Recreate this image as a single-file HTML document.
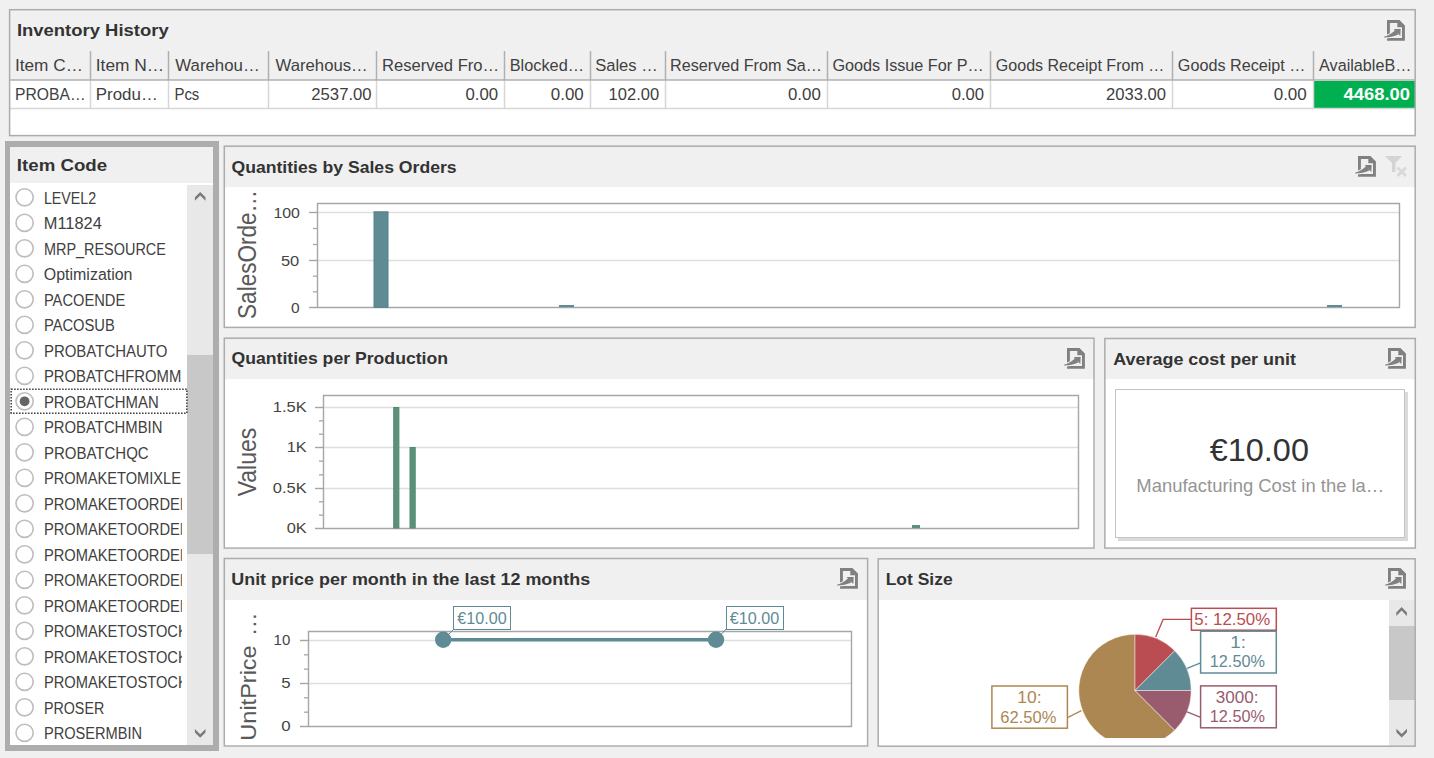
<!DOCTYPE html><html><head><meta charset="utf-8"><style>
html,body{margin:0;padding:0;}
body{width:1434px;height:758px;background:#f0f0f0;position:relative;overflow:hidden;font-family:"Liberation Sans", sans-serif;color:#333333;}
.abs{position:absolute;}
.panel{position:absolute;background:#fff;}
</style></head><body>
<div class="panel" style="left:9px;top:9px;width:1407px;height:127px;"></div>
<div class="abs" style="left:9px;top:9px;width:1407px;height:71px;background:#f0f0f0"></div>
<svg style="position:absolute;left:1383.4px;top:18.5px" width="24" height="24" viewBox="-4 -1 24 24">
<path d="M1.45 1.45 H11.8 L16.45 6.1 V19.35 H1.45 Z" fill="none" stroke="#808080" stroke-width="2.9" stroke-linejoin="miter"/>
<path d="M10.3 0 H11.6 L17.9 6.3 V7.2 H10.3 Z" fill="#808080"/>
<path d="M-3 16.8 C1 16 5 13.5 8.6 9.8 L11.4 14.6 C7 16.4 2.5 17.6 -3 17.6 Z" fill="none" stroke="#f0f0f0" stroke-width="2.2"/>
<path d="M-3 16.8 C1 16 5 13.5 8.6 9.8 L11.4 14.6 C7 16.4 2.5 17.6 -3 17.6 Z" fill="#808080"/>
<path d="M6.6 9 L13.7 9 L13.3 16.1 Z" fill="#808080"/>
</svg>
<div class="abs" style="left:1314px;top:81px;width:101px;height:27px;background:#00b050"></div>
<div class="abs" style="left:5px;top:141px;width:203px;height:598px;border:5px solid #adadad;border-width:6px 6px 6px 5px;background:#fff"></div>
<div class="abs" style="left:10px;top:147px;width:203px;height:36px;background:#f0f0f0"></div>
<div class="abs" style="left:187px;top:185px;width:26px;height:560px;background:#e8e8e8"></div>
<div class="abs" style="left:187px;top:355px;width:26px;height:199px;background:#c8c8c8"></div>
<svg style="position:absolute;left:0;top:0" width="1434" height="758"><polygon points="200.20,192.00 205.50,197.30 205.50,200.80 200.20,195.50 194.90,200.80 194.90,197.30" fill="#7a7a7a"/></svg>
<svg style="position:absolute;left:0;top:0" width="1434" height="758"><polygon points="200.20,737.80 205.50,732.50 205.50,729.00 200.20,734.30 194.90,729.00 194.90,732.50" fill="#7a7a7a"/></svg>
<svg style="position:absolute;left:0;top:0" width="1434" height="758"><defs><clipPath id="lst"><rect x="10" y="183" width="172" height="562"/></clipPath></defs><circle cx="24.6" cy="197.3" r="8.6" fill="#fff" stroke="#bdbdbd" stroke-width="1.6"/><circle cx="24.6" cy="222.8" r="8.6" fill="#fff" stroke="#bdbdbd" stroke-width="1.6"/><circle cx="24.6" cy="248.3" r="8.6" fill="#fff" stroke="#bdbdbd" stroke-width="1.6"/><circle cx="24.6" cy="273.8" r="8.6" fill="#fff" stroke="#bdbdbd" stroke-width="1.6"/><circle cx="24.6" cy="299.3" r="8.6" fill="#fff" stroke="#bdbdbd" stroke-width="1.6"/><circle cx="24.6" cy="324.8" r="8.6" fill="#fff" stroke="#bdbdbd" stroke-width="1.6"/><circle cx="24.6" cy="350.3" r="8.6" fill="#fff" stroke="#bdbdbd" stroke-width="1.6"/><circle cx="24.6" cy="375.8" r="8.6" fill="#fff" stroke="#bdbdbd" stroke-width="1.6"/><circle cx="24.6" cy="401.3" r="8.6" fill="#fff" stroke="#bdbdbd" stroke-width="1.6"/><circle cx="24.6" cy="401.3" r="4.9" fill="#656565"/><circle cx="24.6" cy="426.8" r="8.6" fill="#fff" stroke="#bdbdbd" stroke-width="1.6"/><circle cx="24.6" cy="452.3" r="8.6" fill="#fff" stroke="#bdbdbd" stroke-width="1.6"/><circle cx="24.6" cy="477.8" r="8.6" fill="#fff" stroke="#bdbdbd" stroke-width="1.6"/><circle cx="24.6" cy="503.3" r="8.6" fill="#fff" stroke="#bdbdbd" stroke-width="1.6"/><circle cx="24.6" cy="528.8" r="8.6" fill="#fff" stroke="#bdbdbd" stroke-width="1.6"/><circle cx="24.6" cy="554.3" r="8.6" fill="#fff" stroke="#bdbdbd" stroke-width="1.6"/><circle cx="24.6" cy="579.8" r="8.6" fill="#fff" stroke="#bdbdbd" stroke-width="1.6"/><circle cx="24.6" cy="605.3" r="8.6" fill="#fff" stroke="#bdbdbd" stroke-width="1.6"/><circle cx="24.6" cy="630.8" r="8.6" fill="#fff" stroke="#bdbdbd" stroke-width="1.6"/><circle cx="24.6" cy="656.3" r="8.6" fill="#fff" stroke="#bdbdbd" stroke-width="1.6"/><circle cx="24.6" cy="681.8" r="8.6" fill="#fff" stroke="#bdbdbd" stroke-width="1.6"/><circle cx="24.6" cy="707.3" r="8.6" fill="#fff" stroke="#bdbdbd" stroke-width="1.6"/><circle cx="24.6" cy="732.8" r="8.6" fill="#fff" stroke="#bdbdbd" stroke-width="1.6"/></svg>
<svg style="position:absolute;left:0;top:0" width="1434" height="758"><rect x="11.15" y="389.2" width="175.7" height="24" fill="none" stroke="#3a3a3a" stroke-width="1.5" stroke-dasharray="1.5 1.5"/></svg>
<div class="panel" style="left:224px;top:146px;width:1192px;height:182px;"></div><div class="abs" style="left:224px;top:146px;width:1192px;height:41px;background:#f0f0f0"></div>
<svg style="position:absolute;left:1353.6px;top:155.2px" width="24" height="24" viewBox="-4 -1 24 24">
<path d="M1.45 1.45 H11.8 L16.45 6.1 V19.35 H1.45 Z" fill="none" stroke="#808080" stroke-width="2.9" stroke-linejoin="miter"/>
<path d="M10.3 0 H11.6 L17.9 6.3 V7.2 H10.3 Z" fill="#808080"/>
<path d="M-3 16.8 C1 16 5 13.5 8.6 9.8 L11.4 14.6 C7 16.4 2.5 17.6 -3 17.6 Z" fill="none" stroke="#f0f0f0" stroke-width="2.2"/>
<path d="M-3 16.8 C1 16 5 13.5 8.6 9.8 L11.4 14.6 C7 16.4 2.5 17.6 -3 17.6 Z" fill="#808080"/>
<path d="M6.6 9 L13.7 9 L13.3 16.1 Z" fill="#808080"/>
</svg>
<svg style="position:absolute;left:1385px;top:156px" width="24" height="24" viewBox="0 0 24 24">
<path d="M0 0 H17 L10.5 7 V16 H7 V7 Z" fill="#d4d4d4"/>
<path d="M12.5 11.5 L21 20 M21 11.5 L12.5 20" stroke="#d8d8d8" stroke-width="2.6"/>
</svg>
<div class="panel" style="left:224px;top:338px;width:871px;height:211px;"></div><div class="abs" style="left:224px;top:338px;width:871px;height:41px;background:#f0f0f0"></div>
<svg style="position:absolute;left:1062.6px;top:346.9px" width="24" height="24" viewBox="-4 -1 24 24">
<path d="M1.45 1.45 H11.8 L16.45 6.1 V19.35 H1.45 Z" fill="none" stroke="#808080" stroke-width="2.9" stroke-linejoin="miter"/>
<path d="M10.3 0 H11.6 L17.9 6.3 V7.2 H10.3 Z" fill="#808080"/>
<path d="M-3 16.8 C1 16 5 13.5 8.6 9.8 L11.4 14.6 C7 16.4 2.5 17.6 -3 17.6 Z" fill="none" stroke="#f0f0f0" stroke-width="2.2"/>
<path d="M-3 16.8 C1 16 5 13.5 8.6 9.8 L11.4 14.6 C7 16.4 2.5 17.6 -3 17.6 Z" fill="#808080"/>
<path d="M6.6 9 L13.7 9 L13.3 16.1 Z" fill="#808080"/>
</svg>
<div class="panel" style="left:1104px;top:338px;width:312px;height:211px;"></div><div class="abs" style="left:1104px;top:338px;width:312px;height:41px;background:#f0f0f0"></div>
<svg style="position:absolute;left:1383.7px;top:346.9px" width="24" height="24" viewBox="-4 -1 24 24">
<path d="M1.45 1.45 H11.8 L16.45 6.1 V19.35 H1.45 Z" fill="none" stroke="#808080" stroke-width="2.9" stroke-linejoin="miter"/>
<path d="M10.3 0 H11.6 L17.9 6.3 V7.2 H10.3 Z" fill="#808080"/>
<path d="M-3 16.8 C1 16 5 13.5 8.6 9.8 L11.4 14.6 C7 16.4 2.5 17.6 -3 17.6 Z" fill="none" stroke="#f0f0f0" stroke-width="2.2"/>
<path d="M-3 16.8 C1 16 5 13.5 8.6 9.8 L11.4 14.6 C7 16.4 2.5 17.6 -3 17.6 Z" fill="#808080"/>
<path d="M6.6 9 L13.7 9 L13.3 16.1 Z" fill="#808080"/>
</svg>
<div class="panel" style="left:224px;top:558px;width:644px;height:189px;"></div><div class="abs" style="left:224px;top:558px;width:644px;height:42px;background:#f0f0f0"></div>
<svg style="position:absolute;left:836px;top:567.4px" width="24" height="24" viewBox="-4 -1 24 24">
<path d="M1.45 1.45 H11.8 L16.45 6.1 V19.35 H1.45 Z" fill="none" stroke="#808080" stroke-width="2.9" stroke-linejoin="miter"/>
<path d="M10.3 0 H11.6 L17.9 6.3 V7.2 H10.3 Z" fill="#808080"/>
<path d="M-3 16.8 C1 16 5 13.5 8.6 9.8 L11.4 14.6 C7 16.4 2.5 17.6 -3 17.6 Z" fill="none" stroke="#f0f0f0" stroke-width="2.2"/>
<path d="M-3 16.8 C1 16 5 13.5 8.6 9.8 L11.4 14.6 C7 16.4 2.5 17.6 -3 17.6 Z" fill="#808080"/>
<path d="M6.6 9 L13.7 9 L13.3 16.1 Z" fill="#808080"/>
</svg>
<div class="panel" style="left:878px;top:558px;width:538px;height:189px;"></div><div class="abs" style="left:878px;top:558px;width:538px;height:42px;background:#f0f0f0"></div>
<svg style="position:absolute;left:1383.7px;top:567.4px" width="24" height="24" viewBox="-4 -1 24 24">
<path d="M1.45 1.45 H11.8 L16.45 6.1 V19.35 H1.45 Z" fill="none" stroke="#808080" stroke-width="2.9" stroke-linejoin="miter"/>
<path d="M10.3 0 H11.6 L17.9 6.3 V7.2 H10.3 Z" fill="#808080"/>
<path d="M-3 16.8 C1 16 5 13.5 8.6 9.8 L11.4 14.6 C7 16.4 2.5 17.6 -3 17.6 Z" fill="none" stroke="#f0f0f0" stroke-width="2.2"/>
<path d="M-3 16.8 C1 16 5 13.5 8.6 9.8 L11.4 14.6 C7 16.4 2.5 17.6 -3 17.6 Z" fill="#808080"/>
<path d="M6.6 9 L13.7 9 L13.3 16.1 Z" fill="#808080"/>
</svg>
<svg style="position:absolute;left:0;top:0" width="1434" height="758"><line x1="318" y1="212.5" x2="1399" y2="212.5" stroke="#dedede" stroke-width="1.3"/><line x1="318" y1="260.5" x2="1399" y2="260.5" stroke="#dedede" stroke-width="1.3"/><path d="M317.5 307.5 V203.5 H1399.5 V307.5" fill="none" stroke="#a6a6a6" stroke-width="1.4"/><line x1="309" y1="307.5" x2="1400" y2="307.5" stroke="#a6a6a6" stroke-width="1.4"/><line x1="309" y1="212.5" x2="317.5" y2="212.5" stroke="#a6a6a6" stroke-width="1.4"/><line x1="309" y1="260.5" x2="317.5" y2="260.5" stroke="#a6a6a6" stroke-width="1.4"/><line x1="313" y1="228.50" x2="317.5" y2="228.50" stroke="#a6a6a6" stroke-width="1.3"/><line x1="313" y1="244.50" x2="317.5" y2="244.50" stroke="#a6a6a6" stroke-width="1.3"/><line x1="313" y1="276.17" x2="317.5" y2="276.17" stroke="#a6a6a6" stroke-width="1.3"/><line x1="313" y1="291.83" x2="317.5" y2="291.83" stroke="#a6a6a6" stroke-width="1.3"/></svg>
<svg style="position:absolute;left:0;top:0" width="1434" height="758"><rect x="374" y="211.8" width="14" height="95.5" fill="#5f8b95" stroke="#56808a" stroke-width="1"/></svg>
<div class="abs" style="left:559px;top:305px;width:15px;height:2px;background:#5f8b95"></div>
<div class="abs" style="left:1327px;top:305px;width:15px;height:2px;background:#5f8b95"></div>
<svg style="position:absolute;left:0;top:0" width="1434" height="758"><line x1="324" y1="407.5" x2="1078" y2="407.5" stroke="#dedede" stroke-width="1.3"/><line x1="324" y1="447.5" x2="1078" y2="447.5" stroke="#dedede" stroke-width="1.3"/><line x1="324" y1="488.5" x2="1078" y2="488.5" stroke="#dedede" stroke-width="1.3"/><path d="M323.5 528.5 V395.5 H1078.5 V528.5" fill="none" stroke="#a6a6a6" stroke-width="1.4"/><line x1="315" y1="528.5" x2="1079" y2="528.5" stroke="#a6a6a6" stroke-width="1.4"/><line x1="315" y1="407.5" x2="323.5" y2="407.5" stroke="#a6a6a6" stroke-width="1.4"/><line x1="315" y1="447.5" x2="323.5" y2="447.5" stroke="#a6a6a6" stroke-width="1.4"/><line x1="315" y1="488.5" x2="323.5" y2="488.5" stroke="#a6a6a6" stroke-width="1.4"/><line x1="319" y1="420.83" x2="323.5" y2="420.83" stroke="#a6a6a6" stroke-width="1.3"/><line x1="319" y1="434.17" x2="323.5" y2="434.17" stroke="#a6a6a6" stroke-width="1.3"/><line x1="319" y1="461.17" x2="323.5" y2="461.17" stroke="#a6a6a6" stroke-width="1.3"/><line x1="319" y1="474.83" x2="323.5" y2="474.83" stroke="#a6a6a6" stroke-width="1.3"/><line x1="319" y1="501.83" x2="323.5" y2="501.83" stroke="#a6a6a6" stroke-width="1.3"/><line x1="319" y1="515.17" x2="323.5" y2="515.17" stroke="#a6a6a6" stroke-width="1.3"/></svg>
<svg style="position:absolute;left:0;top:0" width="1434" height="758"><rect x="393.7" y="407.5" width="5.2" height="120.5" fill="#5b9178" stroke="#548a72" stroke-width="1"/><rect x="410" y="447.5" width="5.2" height="80.5" fill="#5b9178" stroke="#548a72" stroke-width="1"/></svg>
<div class="abs" style="left:912px;top:525px;width:8px;height:3px;background:#5b9178"></div>
<div class="abs" style="left:1115px;top:389px;width:288px;height:147px;border:1px solid #c4c4c4;background:#fff;box-shadow:3px 3px 0 #dadada"></div>
<svg style="position:absolute;left:0;top:0" width="1434" height="758"><line x1="309" y1="640.5" x2="851" y2="640.5" stroke="#dedede" stroke-width="1.3"/><line x1="309" y1="683.5" x2="851" y2="683.5" stroke="#dedede" stroke-width="1.3"/><path d="M308.5 726.5 V631.5 H851.5 V726.5" fill="none" stroke="#a6a6a6" stroke-width="1.4"/><line x1="300" y1="726.5" x2="852" y2="726.5" stroke="#a6a6a6" stroke-width="1.4"/><line x1="300" y1="640.5" x2="308.5" y2="640.5" stroke="#a6a6a6" stroke-width="1.4"/><line x1="300" y1="683.5" x2="308.5" y2="683.5" stroke="#a6a6a6" stroke-width="1.4"/><line x1="304" y1="654.83" x2="308.5" y2="654.83" stroke="#a6a6a6" stroke-width="1.3"/><line x1="304" y1="669.17" x2="308.5" y2="669.17" stroke="#a6a6a6" stroke-width="1.3"/><line x1="304" y1="697.83" x2="308.5" y2="697.83" stroke="#a6a6a6" stroke-width="1.3"/><line x1="304" y1="712.17" x2="308.5" y2="712.17" stroke="#a6a6a6" stroke-width="1.3"/></svg>
<svg style="position:absolute;left:0;top:0" width="1434" height="758"><line x1="443.2" y1="639.7" x2="716" y2="639.7" stroke="#5f8b95" stroke-width="3.4"/><circle cx="443.2" cy="639.7" r="8.2" fill="#5f8b95"/><circle cx="716" cy="639.7" r="8.2" fill="#5f8b95"/><line x1="443" y1="640" x2="455" y2="628" stroke="#5f8b95" stroke-width="1"/><line x1="716" y1="640" x2="727" y2="628" stroke="#5f8b95" stroke-width="1"/></svg>
<div class="abs" style="left:453px;top:606px;width:56px;height:22px;border:1px solid #5f8b95;background:#fff"></div>
<div class="abs" style="left:726px;top:606px;width:56px;height:22px;border:1px solid #5f8b95;background:#fff"></div>
<div class="abs" style="left:1389px;top:600px;width:26px;height:146px;background:#e8e8e8"></div>
<div class="abs" style="left:1389px;top:626px;width:26px;height:74px;background:#c8c8c8"></div>
<svg style="position:absolute;left:0;top:0" width="1434" height="758"><polygon points="1401.60,607.10 1406.90,612.40 1406.90,615.90 1401.60,610.60 1396.30,615.90 1396.30,612.40" fill="#7a7a7a"/></svg>
<svg style="position:absolute;left:0;top:0" width="1434" height="758"><polygon points="1401.70,737.60 1407.00,732.30 1407.00,728.80 1401.70,734.10 1396.40,728.80 1396.40,732.30" fill="#7a7a7a"/></svg>
<svg style="position:absolute;left:0;top:0" width="1434" height="758"><defs><clipPath id="lc"><rect x="879" y="600" width="510" height="138"/></clipPath></defs><g clip-path="url(#lc)"><path d="M1135 690.5 L1174.74 730.24 A56.2 56.2 0 1 1 1135.00 634.30 Z" fill="#ad8752" stroke="#ffffff" stroke-opacity="0.45" stroke-width="1"/><path d="M1135 690.5 L1135.00 634.30 A56.2 56.2 0 0 1 1174.74 650.76 Z" fill="#b94d51" stroke="#ffffff" stroke-opacity="0.45" stroke-width="1"/><path d="M1135 690.5 L1174.74 650.76 A56.2 56.2 0 0 1 1191.20 690.50 Z" fill="#5f8b95" stroke="#ffffff" stroke-opacity="0.45" stroke-width="1"/><path d="M1135 690.5 L1191.20 690.50 A56.2 56.2 0 0 1 1174.74 730.24 Z" fill="#985c6e" stroke="#ffffff" stroke-opacity="0.45" stroke-width="1"/><path d="M1155.7 637 L1163.1 619.4 H1191.4" fill="none" stroke="#b94d51" stroke-width="1.3"/><path d="M1187.1 668.4 L1200.6 662.8" fill="none" stroke="#5f8b95" stroke-width="1.3"/><path d="M1187.1 711.8 L1200.6 717.3" fill="none" stroke="#985c6e" stroke-width="1.3"/><path d="M1081.4 710.7 L1067.4 717.6" fill="none" stroke="#ad8752" stroke-width="1.3"/><rect x="1191.4" y="608.3" width="84.90" height="21.90" fill="#fff" stroke="#b94d51" stroke-width="1.5"/><rect x="1200.6" y="631.2" width="75.70" height="41.80" fill="#fff" stroke="#5f8b95" stroke-width="1.5"/><rect x="1200.6" y="685.9" width="75.70" height="41.90" fill="#fff" stroke="#985c6e" stroke-width="1.5"/><rect x="991.9" y="686" width="75.50" height="42.20" fill="#fff" stroke="#ad8752" stroke-width="1.5"/></g></svg>
<svg style="position:absolute;left:0;top:0" width="1434" height="758"><line x1="10" y1="108.5" x2="1415" y2="108.5" stroke="#d6d6d6" stroke-width="1.5"/><line x1="90.5" y1="80" x2="90.5" y2="108.5" stroke="#d6d6d6" stroke-width="1.5"/><line x1="90.5" y1="51" x2="90.5" y2="80" stroke="#b0b0b0" stroke-width="1.5"/><line x1="168.5" y1="80" x2="168.5" y2="108.5" stroke="#d6d6d6" stroke-width="1.5"/><line x1="168.5" y1="51" x2="168.5" y2="80" stroke="#b0b0b0" stroke-width="1.5"/><line x1="268.5" y1="80" x2="268.5" y2="108.5" stroke="#d6d6d6" stroke-width="1.5"/><line x1="268.5" y1="51" x2="268.5" y2="80" stroke="#b0b0b0" stroke-width="1.5"/><line x1="376.5" y1="80" x2="376.5" y2="108.5" stroke="#d6d6d6" stroke-width="1.5"/><line x1="376.5" y1="51" x2="376.5" y2="80" stroke="#b0b0b0" stroke-width="1.5"/><line x1="504.5" y1="80" x2="504.5" y2="108.5" stroke="#d6d6d6" stroke-width="1.5"/><line x1="504.5" y1="51" x2="504.5" y2="80" stroke="#b0b0b0" stroke-width="1.5"/><line x1="590.5" y1="80" x2="590.5" y2="108.5" stroke="#d6d6d6" stroke-width="1.5"/><line x1="590.5" y1="51" x2="590.5" y2="80" stroke="#b0b0b0" stroke-width="1.5"/><line x1="665.5" y1="80" x2="665.5" y2="108.5" stroke="#d6d6d6" stroke-width="1.5"/><line x1="665.5" y1="51" x2="665.5" y2="80" stroke="#b0b0b0" stroke-width="1.5"/><line x1="827.5" y1="80" x2="827.5" y2="108.5" stroke="#d6d6d6" stroke-width="1.5"/><line x1="827.5" y1="51" x2="827.5" y2="80" stroke="#b0b0b0" stroke-width="1.5"/><line x1="990.5" y1="80" x2="990.5" y2="108.5" stroke="#d6d6d6" stroke-width="1.5"/><line x1="990.5" y1="51" x2="990.5" y2="80" stroke="#b0b0b0" stroke-width="1.5"/><line x1="1172.5" y1="80" x2="1172.5" y2="108.5" stroke="#d6d6d6" stroke-width="1.5"/><line x1="1172.5" y1="51" x2="1172.5" y2="80" stroke="#b0b0b0" stroke-width="1.5"/><line x1="1313.5" y1="80" x2="1313.5" y2="108.5" stroke="#d6d6d6" stroke-width="1.5"/><line x1="1313.5" y1="51" x2="1313.5" y2="80" stroke="#b0b0b0" stroke-width="1.5"/><line x1="10" y1="79.9" x2="1415" y2="79.9" stroke="#b0b0b0" stroke-width="1.5"/><rect x="9.6" y="9.7" width="1405.60" height="125.90" fill="none" stroke="#acacac" stroke-width="1.5"/><rect x="224.3" y="146.2" width="1190.90" height="181.20" fill="none" stroke="#acacac" stroke-width="1.5"/><rect x="224.3" y="338.2" width="869.70" height="209.90" fill="none" stroke="#acacac" stroke-width="1.5"/><rect x="1104.85" y="338.5" width="310.45" height="209.60" fill="none" stroke="#acacac" stroke-width="1.5"/><rect x="224.3" y="558.5" width="643.30" height="187.50" fill="none" stroke="#acacac" stroke-width="1.5"/><rect x="878.2" y="558.8" width="537.00" height="187.40" fill="none" stroke="#acacac" stroke-width="1.5"/></svg>
<svg style="position:absolute;left:0;top:0" width="1434" height="758" font-family="Liberation Sans"><defs><clipPath id="lclip"><rect x="10" y="183" width="171.8" height="562"/></clipPath></defs><text transform="translate(16.88,36.30) scale(1.1200,1)" font-size="16.5" font-weight="bold" fill="#333333">Inventory History</text><text transform="translate(16.87,171.30) scale(1.1321,1)" font-size="16.5" font-weight="bold" fill="#333333">Item Code</text><text transform="translate(231.43,172.50) scale(1.0684,1)" font-size="16.5" font-weight="bold" fill="#333333">Quantities by Sales Orders</text><text transform="translate(231.43,364.30) scale(1.0697,1)" font-size="16.5" font-weight="bold" fill="#333333">Quantities per Production</text><text transform="translate(1113.30,364.70) scale(1.0875,1)" font-size="16.5" font-weight="bold" fill="#333333">Average cost per unit</text><text transform="translate(231.21,584.70) scale(1.0884,1)" font-size="16.5" font-weight="bold" fill="#333333">Unit price per month in the last 12 months</text><text transform="translate(885.64,584.90) scale(1.0597,1)" font-size="16.5" font-weight="bold" fill="#333333">Lot Size</text><text transform="translate(14.95,71.00) scale(1.0452,1)" font-size="16.5" font-weight="normal" fill="#404040">Item C…</text><text transform="translate(95.75,71.00) scale(1.0516,1)" font-size="16.5" font-weight="normal" fill="#404040">Item N…</text><text transform="translate(175.30,71.00) scale(1.0198,1)" font-size="16.5" font-weight="normal" fill="#404040">Warehou…</text><text transform="translate(275.60,71.00) scale(1.0124,1)" font-size="16.5" font-weight="normal" fill="#404040">Warehous…</text><text transform="translate(381.99,71.00) scale(1.0062,1)" font-size="16.5" font-weight="normal" fill="#404040">Reserved Fro…</text><text transform="translate(509.71,71.00) scale(0.9889,1)" font-size="16.5" font-weight="normal" fill="#404040">Blocked…</text><text transform="translate(595.20,71.00) scale(1.0034,1)" font-size="16.5" font-weight="normal" fill="#404040">Sales …</text><text transform="translate(670.02,71.00) scale(0.9803,1)" font-size="16.5" font-weight="normal" fill="#404040">Reserved From Sa…</text><text transform="translate(832.42,71.00) scale(0.9821,1)" font-size="16.5" font-weight="normal" fill="#404040">Goods Issue For P…</text><text transform="translate(995.83,71.00) scale(0.9724,1)" font-size="16.5" font-weight="normal" fill="#404040">Goods Receipt From …</text><text transform="translate(1177.82,71.00) scale(0.9811,1)" font-size="16.5" font-weight="normal" fill="#404040">Goods Receipt …</text><text transform="translate(1319.10,71.00) scale(0.9804,1)" font-size="16.5" font-weight="normal" fill="#404040">AvailableB…</text><text transform="translate(15.05,100.00) scale(0.9507,1)" font-size="16.5" font-weight="normal" fill="#404040">PROBA…</text><text transform="translate(95.77,100.00) scale(1.0263,1)" font-size="16.5" font-weight="normal" fill="#404040">Produ…</text><text transform="translate(174.39,100.00) scale(0.9077,1)" font-size="16.5" font-weight="normal" fill="#404040">Pcs</text><text transform="translate(311.29,100.00) scale(1.0121,1)" font-size="16.5" font-weight="normal" fill="#404040">2537.00</text><text transform="translate(465.48,100.00) scale(1.0161,1)" font-size="16.5" font-weight="normal" fill="#404040">0.00</text><text transform="translate(550.77,100.00) scale(1.0258,1)" font-size="16.5" font-weight="normal" fill="#404040">0.00</text><text transform="translate(608.60,100.00) scale(1.0020,1)" font-size="16.5" font-weight="normal" fill="#404040">102.00</text><text transform="translate(787.98,100.00) scale(1.0226,1)" font-size="16.5" font-weight="normal" fill="#404040">0.00</text><text transform="translate(951.69,100.00) scale(1.0097,1)" font-size="16.5" font-weight="normal" fill="#404040">0.00</text><text transform="translate(1105.99,100.00) scale(1.0069,1)" font-size="16.5" font-weight="normal" fill="#404040">2033.00</text><text transform="translate(1273.67,100.00) scale(1.0323,1)" font-size="16.5" font-weight="normal" fill="#404040">0.00</text><text transform="translate(1343.50,100.00) scale(1.1153,1)" font-size="16.5" font-weight="bold" fill="#ffffff">4468.00</text><text transform="translate(273.38,217.70) scale(1.0250,1)" font-size="15.5" font-weight="normal" fill="#444444">100</text><text transform="translate(280.94,265.50) scale(1.0625,1)" font-size="15.5" font-weight="normal" fill="#444444">50</text><text transform="translate(291.00,312.80) scale(1.0000,1)" font-size="15.5" font-weight="normal" fill="#444444">0</text><text transform="translate(272.84,412.20) scale(1.0633,1)" font-size="15.5" font-weight="normal" fill="#444444">1.5K</text><text transform="translate(286.74,452.30) scale(1.0588,1)" font-size="15.5" font-weight="normal" fill="#444444">1K</text><text transform="translate(272.84,492.80) scale(1.0633,1)" font-size="15.5" font-weight="normal" fill="#444444">0.5K</text><text transform="translate(286.74,532.50) scale(1.0588,1)" font-size="15.5" font-weight="normal" fill="#444444">0K</text><text transform="translate(273.53,644.80) scale(0.9688,1)" font-size="15.5" font-weight="normal" fill="#444444">10</text><text transform="translate(281.31,687.90) scale(1.0857,1)" font-size="15.5" font-weight="normal" fill="#444444">5</text><text transform="translate(281.31,731.00) scale(1.0857,1)" font-size="15.5" font-weight="normal" fill="#444444">0</text><text transform="translate(256.00,318.90) rotate(-90) scale(0.9014,1)" font-size="25" font-weight="normal" fill="#595959">SalesOrde…</text><text transform="translate(256.00,496.30) rotate(-90) scale(0.9176,1)" font-size="25" font-weight="normal" fill="#595959">Values</text><text transform="translate(255.50,740.64) rotate(-90) scale(1.0686,1)" font-size="22" font-weight="normal" fill="#595959">UnitPrice</text><text transform="translate(255.50,636.28) rotate(-90) scale(1.0938,1)" font-size="22" font-weight="normal" fill="#595959">…</text><text transform="translate(1209.80,461.20) scale(1.0457,1)" font-size="31" font-weight="normal" fill="#333333">€10.00</text><text transform="translate(1136.35,491.50) scale(1.0539,1)" font-size="17.5" font-weight="normal" fill="#959595">Manufacturing Cost in the la…</text><text transform="translate(457.30,623.70) scale(0.9780,1)" font-size="16.5" font-weight="normal" fill="#5f8b95">€10.00</text><text transform="translate(729.80,623.70) scale(0.9780,1)" font-size="16.5" font-weight="normal" fill="#5f8b95">€10.00</text><text transform="translate(1194.35,625.00) scale(1.0535,1)" font-size="16" font-weight="normal" fill="#b94d51">5: 12.50%</text><text transform="translate(1230.22,648.00) scale(1.1818,1)" font-size="16" font-weight="normal" fill="#5f8b95">1:</text><text transform="translate(1209.78,666.50) scale(1.0170,1)" font-size="16" font-weight="normal" fill="#5f8b95">12.50%</text><text transform="translate(1215.63,702.90) scale(1.0684,1)" font-size="16" font-weight="normal" fill="#985c6e">3000:</text><text transform="translate(1209.78,722.30) scale(1.0170,1)" font-size="16" font-weight="normal" fill="#985c6e">12.50%</text><text transform="translate(1017.20,703.30) scale(1.0950,1)" font-size="16" font-weight="normal" fill="#ad8752">10:</text><text transform="translate(1000.37,722.60) scale(1.0340,1)" font-size="16" font-weight="normal" fill="#ad8752">62.50%</text><g clip-path="url(#lclip)"><text transform="translate(43.94,203.60) scale(0.8644,1)" font-size="16.5" font-weight="normal" fill="#404040">LEVEL2</text><text transform="translate(43.81,229.10) scale(0.9930,1)" font-size="16.5" font-weight="normal" fill="#404040">M11824</text><text transform="translate(43.92,254.60) scale(0.8761,1)" font-size="16.5" font-weight="normal" fill="#404040">MRP_RESOURCE</text><text transform="translate(43.83,280.10) scale(0.9678,1)" font-size="16.5" font-weight="normal" fill="#404040">Optimization</text><text transform="translate(43.91,305.60) scale(0.8911,1)" font-size="16.5" font-weight="normal" fill="#404040">PACOENDE</text><text transform="translate(43.91,331.10) scale(0.8936,1)" font-size="16.5" font-weight="normal" fill="#404040">PACOSUB</text><text transform="translate(43.89,356.60) scale(0.9090,1)" font-size="16.5" font-weight="normal" fill="#404040">PROBATCHAUTO</text><text transform="translate(43.90,382.10) scale(0.8993,1)" font-size="16.5" font-weight="normal" fill="#404040">PROBATCHFROMM</text><text transform="translate(43.90,407.60) scale(0.9040,1)" font-size="16.5" font-weight="normal" fill="#404040">PROBATCHMAN</text><text transform="translate(43.90,433.10) scale(0.9015,1)" font-size="16.5" font-weight="normal" fill="#404040">PROBATCHMBIN</text><text transform="translate(43.89,458.60) scale(0.9097,1)" font-size="16.5" font-weight="normal" fill="#404040">PROBATCHQC</text><text transform="translate(43.91,484.10) scale(0.8869,1)" font-size="16.5" font-weight="normal" fill="#404040">PROMAKETOMIXLE</text><text transform="translate(43.91,509.60) scale(0.8903,1)" font-size="16.5" font-weight="normal" fill="#404040">PROMAKETOORDERS</text><text transform="translate(43.91,535.10) scale(0.8903,1)" font-size="16.5" font-weight="normal" fill="#404040">PROMAKETOORDERS</text><text transform="translate(43.91,560.60) scale(0.8903,1)" font-size="16.5" font-weight="normal" fill="#404040">PROMAKETOORDERS</text><text transform="translate(43.91,586.10) scale(0.8903,1)" font-size="16.5" font-weight="normal" fill="#404040">PROMAKETOORDERS</text><text transform="translate(43.91,611.60) scale(0.8903,1)" font-size="16.5" font-weight="normal" fill="#404040">PROMAKETOORDERS</text><text transform="translate(43.91,637.10) scale(0.8903,1)" font-size="16.5" font-weight="normal" fill="#404040">PROMAKETOSTOCK</text><text transform="translate(43.91,662.60) scale(0.8903,1)" font-size="16.5" font-weight="normal" fill="#404040">PROMAKETOSTOCK</text><text transform="translate(43.91,688.10) scale(0.8903,1)" font-size="16.5" font-weight="normal" fill="#404040">PROMAKETOSTOCK</text><text transform="translate(43.93,713.60) scale(0.8662,1)" font-size="16.5" font-weight="normal" fill="#404040">PROSER</text><text transform="translate(43.91,739.10) scale(0.8853,1)" font-size="16.5" font-weight="normal" fill="#404040">PROSERMBIN</text></g></svg>
</body></html>
